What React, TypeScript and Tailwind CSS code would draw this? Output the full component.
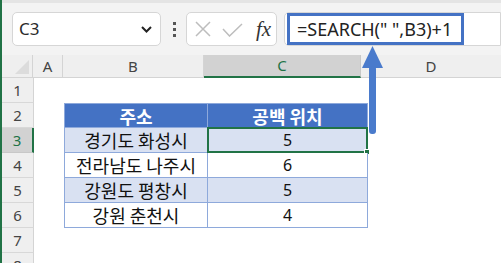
import React from "react";

const rows = [
  { addr: "경기도 화성시", pos: 5, shade: true },
  { addr: "전라남도 나주시", pos: 6, shade: false },
  { addr: "강원도 평창시", pos: 5, shade: true },
  { addr: "강원 춘천시", pos: 4, shade: false },
];

const kr = "font-['Noto_Sans_CJK_KR','Noto_Sans',sans-serif]";
const ui = "font-['Noto_Sans','Open_Sans',sans-serif]";

function RowHead({ n, active }: { n: number; active?: boolean }) {
  return (
    <div
      className={
        "h-[25px] flex items-center justify-center border-b text-[15px] " +
        ui +
        (active
          ? " bg-[#d2d2d2] text-[#217346] border-r-2 border-r-[#217346] border-b-[#c8c8c8]"
          : " bg-[#efefef] text-[#444] border-r border-r-[#d4d4d4] border-b-[#d8d8d8]")
      }
    >
      {n}
    </div>
  );
}

export default function App() {
  return (
    <div className="w-[501px] h-[263px] overflow-hidden bg-[#f3f3f3] border-l-2 border-[#217346] relative select-none">
      {/* top strip */}
      <div className="h-[3px] bg-[#e4e4e4]" />

      {/* formula bar */}
      <div className="flex items-center mt-[9px] h-[34px]">
        <div className="ml-[10px] w-[149px] h-[34px] bg-white border border-[#d6d6d6] rounded-[5px] flex items-center px-[6px]">
          <span className={"text-[17px] text-[#2b2b2b] " + ui}>C3</span>
          <svg className="ml-auto mr-[2px]" width="11" height="7" viewBox="0 0 11 7">
            <path d="M1 1 L5.5 5.5 L10 1" fill="none" stroke="#222" strokeWidth="2" />
          </svg>
        </div>
        <div className="ml-[12px] flex flex-col gap-[3px]">
          <div className="w-[3px] h-[3px] bg-[#555]" />
          <div className="w-[3px] h-[3px] bg-[#555]" />
          <div className="w-[3px] h-[3px] bg-[#555]" />
        </div>
        <div className="ml-[10px] w-[91px] h-[34px] bg-white border border-[#d6d6d6] rounded-[5px] flex items-center">
          <svg className="ml-[8px]" width="16" height="16" viewBox="0 0 16 16">
            <path d="M1 1 L15 15 M15 1 L1 15" stroke="#bdbdbd" strokeWidth="1.5" fill="none" />
          </svg>
          <svg className="ml-[11px] mt-[2px]" width="21" height="14" viewBox="0 0 21 14">
            <path d="M1 6 L7.5 13 L20 1" stroke="#bdbdbd" strokeWidth="1.5" fill="none" />
          </svg>
          <span className="ml-[13px] text-[21px] italic text-[#333] font-['Liberation_Serif',serif] leading-none">fx</span>
        </div>
        <div className="ml-[7px] flex-1 h-[34px] bg-white border border-[#d6d6d6] rounded-l-[5px] flex items-center pl-[2px]">
          <div className="h-[32px] w-[177px] border-[3px] border-[#4472c4] flex items-center pl-[7px]">
            <span className={"text-[18px] text-[#222] whitespace-pre " + ui}>=SEARCH(" ",B3)+1</span>
          </div>
        </div>
      </div>

      {/* sheet */}
      <div className="mt-[9px] bg-white">
        {/* column headers */}
        <div className="flex h-[23px]">
          <div className="w-[32px] bg-[#efefef] border-r border-b border-[#d4d4d4] relative overflow-hidden">
            <div className="absolute right-[3px] bottom-[3px] w-0 h-0 border-l-[14px] border-l-transparent border-b-[14px] border-b-[#dcdcdc]" />
          </div>
          <div className={"w-[30px] bg-[#efefef] border-r border-b border-[#d4d4d4] flex items-center justify-center text-[15px] text-[#444] " + ui}>A</div>
          <div className={"w-[144px] bg-[#efefef] border-r border-b border-[#d4d4d4] flex items-center justify-center text-[15px] text-[#444] " + ui}>B</div>
          <div className={"w-[160px] bg-[#d2d2d2] border-r border-r-[#c8c8c8] border-b-2 border-b-[#217346] flex items-center justify-center text-[15px] text-[#217346] " + ui}>C</div>
          <div className={"w-[140px] shrink-0 bg-[#efefef] border-b border-[#d4d4d4] flex items-center justify-center text-[15px] text-[#444] " + ui}>D</div>
        </div>

        <div className="flex">
          {/* row headers */}
          <div className="w-[32px] shrink-0">
            {[1, 2, 3, 4, 5, 6, 7, 8].map((n) => (
              <RowHead key={n} n={n} active={n === 3} />
            ))}
          </div>

          {/* cells */}
          <div className="flex-1">
            <div className="h-[25px]" />
            <div className="flex h-[25px] ml-[30px]">
              <div className={"w-[144px] bg-[#4472c4] border border-[#8ea9db] flex items-center justify-center text-white font-bold text-[18px] leading-none " + kr}>주소</div>
              <div className={"w-[160px] bg-[#4472c4] border-y border-r border-[#8ea9db] flex items-center justify-center text-white font-bold text-[18px] leading-none " + kr}>공백 위치</div>
            </div>
            {rows.map((r, i) => (
              <div key={i} className="flex h-[25px] ml-[30px]">
                <div
                  className={
                    "w-[144px] border-x border-b border-[#8ea9db] flex items-center justify-center text-[18px] leading-none text-[#111] " +
                    kr +
                    (r.shade ? " bg-[#d9e1f2]" : " bg-white")
                  }
                >
                  {r.addr}
                </div>
                <div
                  className={
                    "w-[160px] border-r border-b border-[#8ea9db] flex items-center justify-center text-[16px] text-[#111] relative " +
                    ui +
                    (r.shade ? " bg-[#d9e1f2]" : " bg-white")
                  }
                >
                  {r.pos}
                  {i === 0 && (
                    <div className="absolute -left-px -top-px -right-px -bottom-px border-2 border-[#217346]">
                      <div className="absolute -right-[4px] -bottom-[4px] w-[6px] h-[6px] bg-[#217346] border border-white" />
                    </div>
                  )}
                </div>
              </div>
            ))}
          </div>
        </div>
      </div>

      {/* arrow from cell to formula */}
      <svg className="absolute left-[359px] top-[46px]" width="24" height="90" viewBox="0 0 24 90">
        <path d="M11.5 0 L22 22 L1 22 Z" fill="#4a7bcc" />
        <rect x="8" y="20" width="7" height="68" rx="3" fill="#4a7bcc" />
      </svg>
    </div>
  );
}
